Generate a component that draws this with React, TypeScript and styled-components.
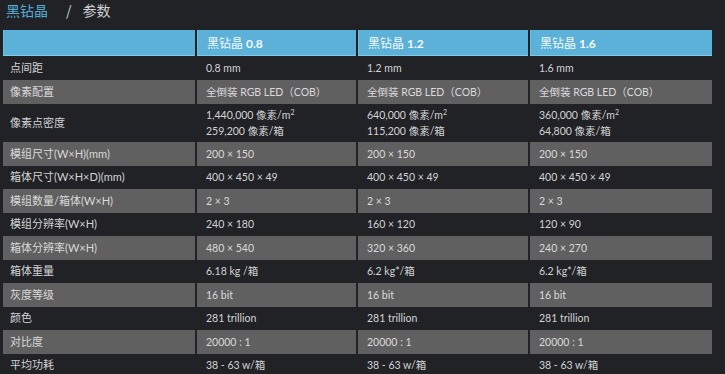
import React, { FC } from 'react';
import styled, { createGlobalStyle } from 'styled-components';

const GlobalStyle = createGlobalStyle`
  html, body {
    margin: 0;
    padding: 0;
    background: #202226;
  }
  body {
    font-family: Lato, 'Noto Sans CJK SC', sans-serif;
    color: #d6d6d6;
  }
`;

const Page = styled.div`
  width: 725px;
  height: 374px;
  overflow: hidden;
  padding: 0 0 0 3px;
  box-sizing: border-box;
`;

const Breadcrumb = styled.div`
  display: flex;
  align-items: center;
  height: 30px;
  padding: 0 0 0 3px;
  font-family: 'Noto Sans CJK SC', sans-serif;
  font-size: 14px;
  line-height: 20px;
  transform: translateY(-5px);
`;

const Crumb = styled.span<{ $active?: boolean }>`
  color: ${(p) => (p.$active ? '#55acd4' : '#cfd0d1')};
`;

const Slash = styled.span`
  color: #cfd0d1;
  padding: 0 11px 0 18px;
`;

const Table = styled.div`
  display: grid;
  grid-template-columns: 192px 159px 170px 182px;
  grid-template-rows: 26px 24px 24px 38px repeat(10, 23.5px);
  column-gap: 2px;
`;

type Tone = 'head' | 'dark' | 'grey';

const Cell = styled.div<{ $tone: Tone; $label?: boolean }>`
  display: flex;
  flex-direction: column;
  justify-content: center;
  box-sizing: border-box;
  padding: 0 0 0 ${(p) => (p.$label ? '7px' : '9px')};
  font-family: Lato, 'Noto Sans CJK SC', sans-serif;
  font-size: ${(p) => (p.$label ? '11px' : '10.5px')};
  line-height: 16px;
  white-space: nowrap;
  background: ${(p) =>
    p.$tone === 'head' ? '#5bb1d8' : p.$tone === 'grey' ? '#606060' : 'transparent'};
  color: ${(p) => (p.$tone === 'head' ? '#f4fafd' : p.$tone === 'grey' ? '#d9d9d9' : '#d3d3d3')};
  ${(p) =>
    p.$tone === 'head' &&
    `
    padding-left: 10px;
    font-size: 12px;
    box-shadow: inset 0 -1px 0 #7fc8e8, inset 1px 0 0 #6cbde0;
  `}
`;

const ModelName = styled.span`
  font-family: 'Noto Sans CJK SC', sans-serif;
  font-weight: 400;
`;

const ModelSize = styled.span`
  font-family: Lato, sans-serif;
  font-weight: 700;
  padding-left: 3px;
`;

const Sup = styled.sup`
  font-size: 7px;
  line-height: 0;
  vertical-align: 4px;
`;

const Row = styled.div`
  display: contents;
`;

type Spec = { label: string; values: React.ReactNode[] };

const density = (a: string, b: string) => (
  <>
    <span>
      {a} 像素/m<Sup>2</Sup>
    </span>
    <span>{b} 像素/箱</span>
  </>
);

const specs: Spec[] = [
  { label: '点间距', values: ['0.8 mm', '1.2 mm', '1.6 mm'] },
  {
    label: '像素配置',
    values: ['全倒装 RGB LED（COB）', '全倒装 RGB LED（COB）', '全倒装 RGB LED（COB）'],
  },
  {
    label: '像素点密度',
    values: [
      density('1,440,000', '259,200'),
      density('640,000', '115,200'),
      density('360,000', '64,800'),
    ],
  },
  { label: '模组尺寸(W×H)(mm)', values: ['200 × 150', '200 × 150', '200 × 150'] },
  {
    label: '箱体尺寸(W×H×D)(mm)',
    values: ['400 × 450 × 49', '400 × 450 × 49', '400 × 450 × 49'],
  },
  { label: '模组数量/箱体(W×H)', values: ['2 × 3', '2 × 3', '2 × 3'] },
  { label: '模组分辨率(W×H)', values: ['240 × 180', '160 × 120', '120 × 90'] },
  { label: '箱体分辨率(W×H)', values: ['480 × 540', '320 × 360', '240 × 270'] },
  { label: '箱体重量', values: ['6.18 kg /箱', '6.2 kg*/箱', '6.2 kg*/箱'] },
  { label: '灰度等级', values: ['16 bit', '16 bit', '16 bit'] },
  { label: '颜色', values: ['281 trillion', '281 trillion', '281 trillion'] },
  { label: '对比度', values: ['20000 : 1', '20000 : 1', '20000 : 1'] },
  { label: '平均功耗', values: ['38 - 63 w/箱', '38 - 63 w/箱', '38 - 63 w/箱'] },
];

const models = ['0.8', '1.2', '1.6'];

const App: FC = () => {
  return (
    <>
      <GlobalStyle />
      <Page>
        <Breadcrumb>
          <Crumb $active>黑钻晶</Crumb>
          <Slash>/</Slash>
          <Crumb>参数</Crumb>
        </Breadcrumb>
        <Table>
          <Cell $tone='head' />
          {models.map((m) => (
            <Cell $tone='head' key={m}>
              <div>
                <ModelName>黑钻晶</ModelName>
                <ModelSize>{m}</ModelSize>
              </div>
            </Cell>
          ))}
          {specs.map((row, i) => {
            const tone: Tone = i % 2 === 1 ? 'grey' : 'dark';
            return (
              <Row key={row.label}>
                <Cell $tone={tone} $label>
                  {row.label}
                </Cell>
                {row.values.map((v, j) => (
                  <Cell $tone={tone} key={j}>
                    {v}
                  </Cell>
                ))}
              </Row>
            );
          })}
        </Table>
      </Page>
    </>
  );
};

export default App;
